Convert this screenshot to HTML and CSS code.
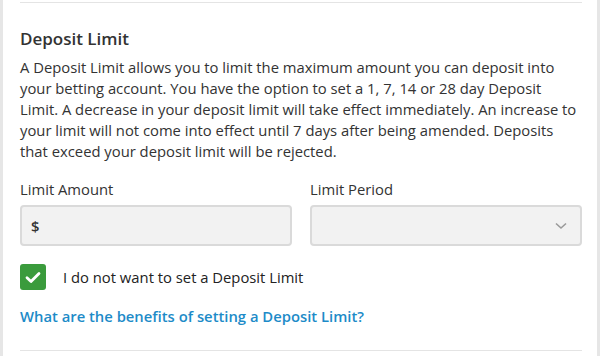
FILE: index.html
```html
<!DOCTYPE html>
<html>
<head>
<meta charset="utf-8">
<link rel="stylesheet" href="styles.css">
</head>
<body>
<div class="panel">
  <div class="rule rule-top"></div>
  <h2 class="title">Deposit Limit</h2>
  <p class="desc">A Deposit Limit allows you to limit the maximum amount you can deposit into your betting account. You have the option to set a 1, 7, 14 or 28 day Deposit Limit. A decrease in your deposit limit will take effect immediately. An increase to your limit will not come into effect until 7 days after being amended. Deposits that exceed your deposit limit will be rejected.</p>
  <div class="fields">
    <div class="field">
      <label class="label">Limit Amount</label>
      <div class="box"><span class="currency">$</span></div>
    </div>
    <div class="field">
      <label class="label">Limit Period</label>
      <div class="box box-select">
        <svg class="chev" width="12" height="8" viewBox="0 0 12 8"><path d="M1 1.5 L6 6 L11 1.5" fill="none" stroke="#9a9a9a" stroke-width="1.6"/></svg>
      </div>
    </div>
  </div>
  <div class="check-row">
    <span class="check"><svg width="16" height="13" viewBox="0 0 16 13"><path d="M2 6.8 L6 10.6 L14 2.4" fill="none" stroke="#fff" stroke-width="2.8" stroke-linecap="round" stroke-linejoin="round"/></svg></span>
    <span class="check-text">I do not want to set a Deposit Limit</span>
  </div>
  <a class="link" href="#">What are the benefits of setting a Deposit Limit?</a>
  <div class="rule rule-bottom"></div>
</div>
</body>
</html>
```
FILE: styles.css
```css
html, body {
  margin: 0;
  padding: 0;
  background: #fff;
}
body {
  font-family: "Open Sans", "Noto Sans", sans-serif;
  color: #333;
}
.panel {
  width: 600px;
  height: 356px;
  box-sizing: border-box;
  border-left: 3px solid #e6e6e6;
  border-right: 3px solid #e6e6e6;
  padding: 2px 15px 0 17px;
  display: flex;
  flex-direction: column;
}
.rule {
  height: 1px;
  background: #e4e4e4;
}
.title {
  margin: 24px 0 0;
  font-size: 17px;
  line-height: 23px;
  font-weight: 600;
  color: #333;
}
.desc {
  margin: 7px 0 0;
  font-size: 14.8px;
  line-height: 21px;
  color: #333;
}
.fields {
  display: grid;
  grid-template-columns: 1fr 1fr;
  column-gap: 18px;
  margin-top: 17px;
}
.field {
  display: flex;
  flex-direction: column;
}
.label {
  font-size: 14.8px;
  line-height: 21px;
  color: #333;
}
.box {
  margin-top: 5px;
  height: 41px;
  box-sizing: border-box;
  background: #f2f2f2;
  border: 2px solid #dadada;
  border-radius: 4px;
  display: flex;
  align-items: center;
  padding: 0 9px;
}
.box-select {
  justify-content: flex-end;
  padding-right: 13px;
}
.currency {
  font-size: 14.8px;
  font-weight: 600;
  color: #333;
}
.check-row {
  display: flex;
  align-items: center;
  margin-top: 18px;
}
.check {
  width: 26px;
  height: 26px;
  border-radius: 3px;
  background: #3a9b3c;
  display: flex;
  align-items: center;
  justify-content: center;
}
.check-text {
  margin-left: 17px;
  font-size: 14.8px;
  line-height: 21px;
  color: #222;
}
.link {
  margin-top: 16px;
  font-size: 14.8px;
  line-height: 21px;
  font-weight: 600;
  color: #1d8bc8;
  text-decoration: none;
  align-self: flex-start;
}
.rule-bottom {
  margin-top: 23px;
}
```
